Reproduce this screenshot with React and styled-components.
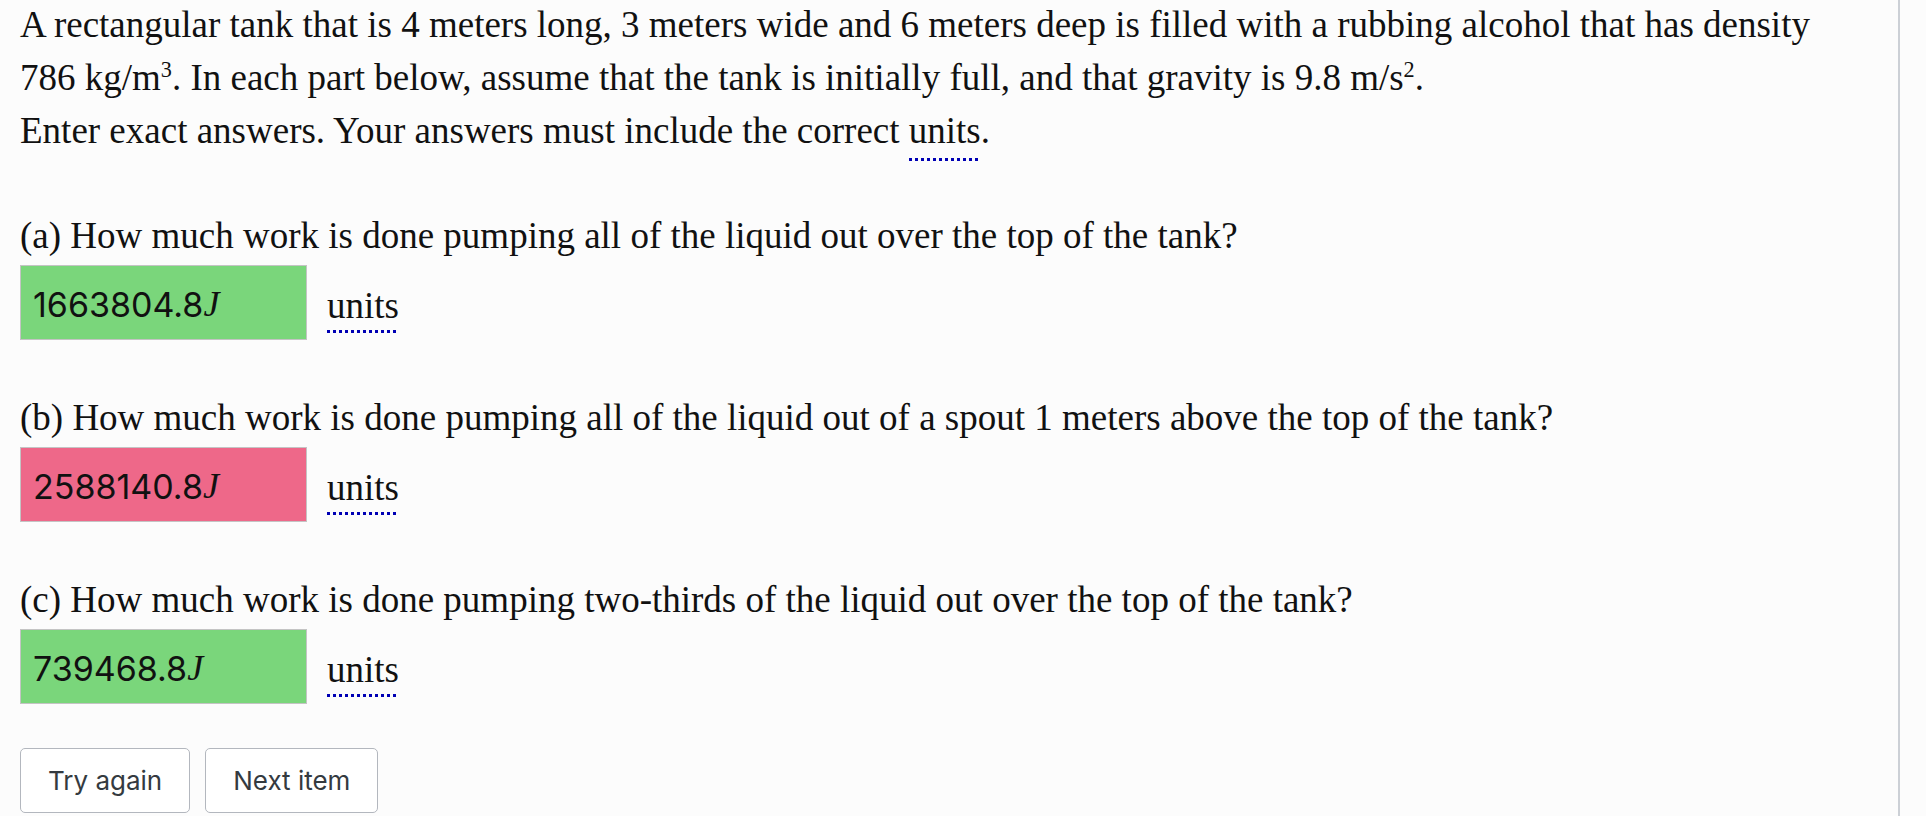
import React from 'react';
import styled, { createGlobalStyle } from 'styled-components';

const GlobalStyle = createGlobalStyle`
  html, body { margin:0; padding:0; background:#fcfcfc; }
  body { font-family:"Liberation Serif", "Times New Roman", serif; color:#111; }
`;

const Page = styled.div`
  display:flex;
  min-height:816px;
`;

const Main = styled.main`
  width:1900px;
  box-sizing:border-box;
  padding:0 20px;
  border-right:2px solid #ccd0d6;
  font-size:37px;
  line-height:53px;
`;

const Intro = styled.p`
  margin:-2px 0 0;
`;

const Sup = styled.sup`
  font-size:0.6em;
  line-height:0;
  vertical-align:0.6em;
`;

// dotted blue underline used for the "units" help links
const Dotted = styled.span`
  padding-bottom:${p => p.$pad || '10px'};
  background-image:linear-gradient(to right, #0000b4 0 3px, transparent 3px 6px);
  background-size:6px 3px;
  background-repeat:repeat-x;
  background-position:0 100%;
`;

const Part = styled.section`
  margin-top:${p => p.$first ? '52px' : '51px'};
`;

const Question = styled.p`
  margin:0 0 3px;
`;

const AnswerRow = styled.div`
  display:flex;
  align-items:center;
  gap:20px;
`;

const AnswerBox = styled.div`
  width:287px;
  height:75px;
  box-sizing:border-box;
  border:1px solid #c4c4c4;
  background:${p => p.$ok ? '#7ad67b' : '#ee6889'};
  display:flex;
  align-items:center;
  padding:4px 12px 0;
  font-family:Inter, "Liberation Sans", sans-serif;
  font-size:34px;
  color:#111;
`;

const MathJ = styled.i`
  font-family:"Liberation Serif", serif;
  font-size:36px;
`;

const Units = styled.span`
  margin-top:6px;
`;

const Actions = styled.div`
  display:flex;
  gap:15px;
  margin-top:44px;
`;

const Button = styled.button`
  height:65px;
  padding:0 27px;
  background:#fff;
  border:1px solid #b3b7be;
  border-radius:5px;
  font-family:Inter, "Liberation Sans", sans-serif;
  font-size:26px;
  color:#343a40;
`;

const parts = [
  { label: '(a) How much work is done pumping all of the liquid out over the top of the tank?', value: '1663804.8', ok: true },
  { label: '(b) How much work is done pumping all of the liquid out of a spout 1 meters above the top of the tank?', value: '2588140.8', ok: false },
  { label: '(c) How much work is done pumping two-thirds of the liquid out over the top of the tank?', value: '739468.8', ok: true },
];

export default function App() {
  return (
    <>
      <GlobalStyle />
      <Page>
        <Main>
          <Intro>
            A rectangular tank that is 4 meters long, 3 meters wide and 6 meters deep is filled with a rubbing alcohol that has density<br />
            786 kg/m<Sup>3</Sup>. In each part below, assume that the tank is initially full, and that gravity is 9.8 m/s<Sup>2</Sup>.<br />
            Enter exact answers. Your answers must include the correct <Dotted $pad="10px">units</Dotted>.
          </Intro>
          {parts.map((part, i) => (
            <Part key={i} $first={i === 0}>
              <Question>{part.label}</Question>
              <AnswerRow>
                <AnswerBox $ok={part.ok}>
                  {part.value}<MathJ>J</MathJ>
                </AnswerBox>
                <Units><Dotted $pad="7px">units</Dotted></Units>
              </AnswerRow>
            </Part>
          ))}
          <Actions>
            <Button>Try again</Button>
            <Button>Next item</Button>
          </Actions>
        </Main>
      </Page>
    </>
  );
}
